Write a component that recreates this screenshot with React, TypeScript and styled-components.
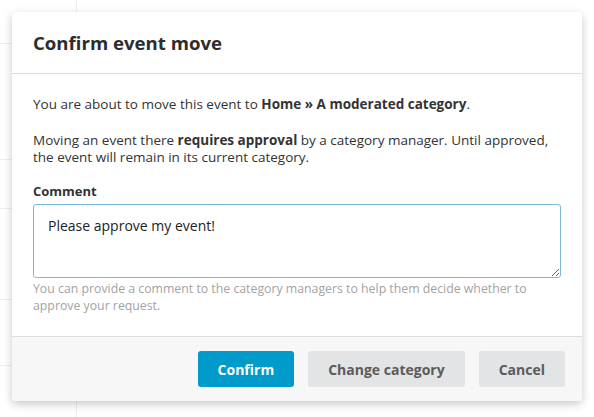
import styled, { createGlobalStyle } from "styled-components";

const FONT = `"Open Sans", Lato, sans-serif`;

const GlobalStyle = createGlobalStyle`
  html, body {
    margin: 0;
    padding: 0;
    background: #fff;
  }
  body {
    font-family: ${FONT};
    color: #333;
  }
`;

// Page behind the dialog
const Page = styled.div`
  position: relative;
  width: 594px;
  height: 417px;
  overflow: hidden;
  display: flex;
`;

const SideList = styled.div`
  width: 76px;
  border-right: 1px solid #eee;
  display: flex;
  flex-direction: column;
`;

const SideRow = styled.div<{ $h: number }>`
  height: ${(p) => p.$h}px;
  border-bottom: 1px solid #eee;
  flex-shrink: 0;
`;

const Backdrop = styled.div`
  position: absolute;
  inset: 0;
  display: flex;
  justify-content: center;
  padding-top: 12px;
`;

const Dialog = styled.div`
  width: 570px;
  height: 389px;
  background: #fff;
  border-radius: 4px;
  box-shadow: 0 3px 10px rgba(0, 0, 0, 0.22);
  display: flex;
  flex-direction: column;
  overflow: hidden;
`;

const Header = styled.div`
  height: 61px;
  padding: 0 21px;
  display: flex;
  align-items: center;
  border-bottom: 1px solid #dcdcdc;
  flex-shrink: 0;
`;

const Title = styled.h2`
  margin: 0;
  font-size: 18.6px;
  font-weight: 700;
  color: #2d2d2d;
`;

const Body = styled.div`
  flex: 1;
  padding: 22px 21px 0;
  font-size: 13.5px;
  line-height: 17px;
  color: #333;
`;

const Para = styled.p`
  margin: 0 0 19px;

  &:last-of-type {
    margin-bottom: 17px;
  }
`;

const Label = styled.div`
  font-size: 13px;
  font-weight: 700;
  line-height: 17px;
  margin: 0 0 4px;
  color: #333;
`;

const TextArea = styled.textarea`
  display: block;
  box-sizing: border-box;
  width: 528px;
  height: 74px;
  margin: 0;
  padding: 12px 14px;
  border: 1px solid #7db8df;
  border-radius: 3px;
  font-family: ${FONT};
  font-size: 14px;
  line-height: 17px;
  color: #222;
  resize: vertical;
  outline: none;
`;

const Help = styled.div`
  margin-top: 2px;
  font-size: 12.3px;
  line-height: 17px;
  color: #a3a3a3;
  padding-right: 14px;
`;

const Footer = styled.div`
  height: 64px;
  background: #f7f7f7;
  border-top: 1px solid #dcdcdc;
  display: flex;
  align-items: center;
  justify-content: flex-end;
  gap: 14px;
  padding: 0 17px 0 0;
  flex-shrink: 0;
`;

const Button = styled.button<{ $primary?: boolean }>`
  height: 36px;
  padding: 0 20px;
  border: none;
  border-radius: 3px;
  font-family: ${FONT};
  font-size: 14px;
  font-weight: 700;
  background: ${(p) => (p.$primary ? "#009acb" : "#e3e4e6")};
  color: ${(p) => (p.$primary ? "#fff" : "#5b5b5b")};
  cursor: pointer;
`;

export default function App() {
  return (
    <>
      <GlobalStyle />
      <Page>
        <SideList>
          <SideRow $h={43} />
          <SideRow $h={115} />
          <SideRow $h={48} />
          <SideRow $h={90} />
          <SideRow $h={65} />
        </SideList>
        <Backdrop>
          <Dialog>
            <Header>
              <Title>Confirm event move</Title>
            </Header>
            <Body>
              <Para>
                You are about to move this event to <strong>Home » A moderated category</strong>.
              </Para>
              <Para>
                Moving an event there <strong>requires approval</strong> by a category manager. Until approved,
                the event will remain in its current category.
              </Para>
              <Label>Comment</Label>
              <TextArea defaultValue="Please approve my event!" />
              <Help>
                You can provide a comment to the category managers to help them decide whether to approve
                your request.
              </Help>
            </Body>
            <Footer>
              <Button $primary>Confirm</Button>
              <Button>Change category</Button>
              <Button>Cancel</Button>
            </Footer>
          </Dialog>
        </Backdrop>
      </Page>
    </>
  );
}
